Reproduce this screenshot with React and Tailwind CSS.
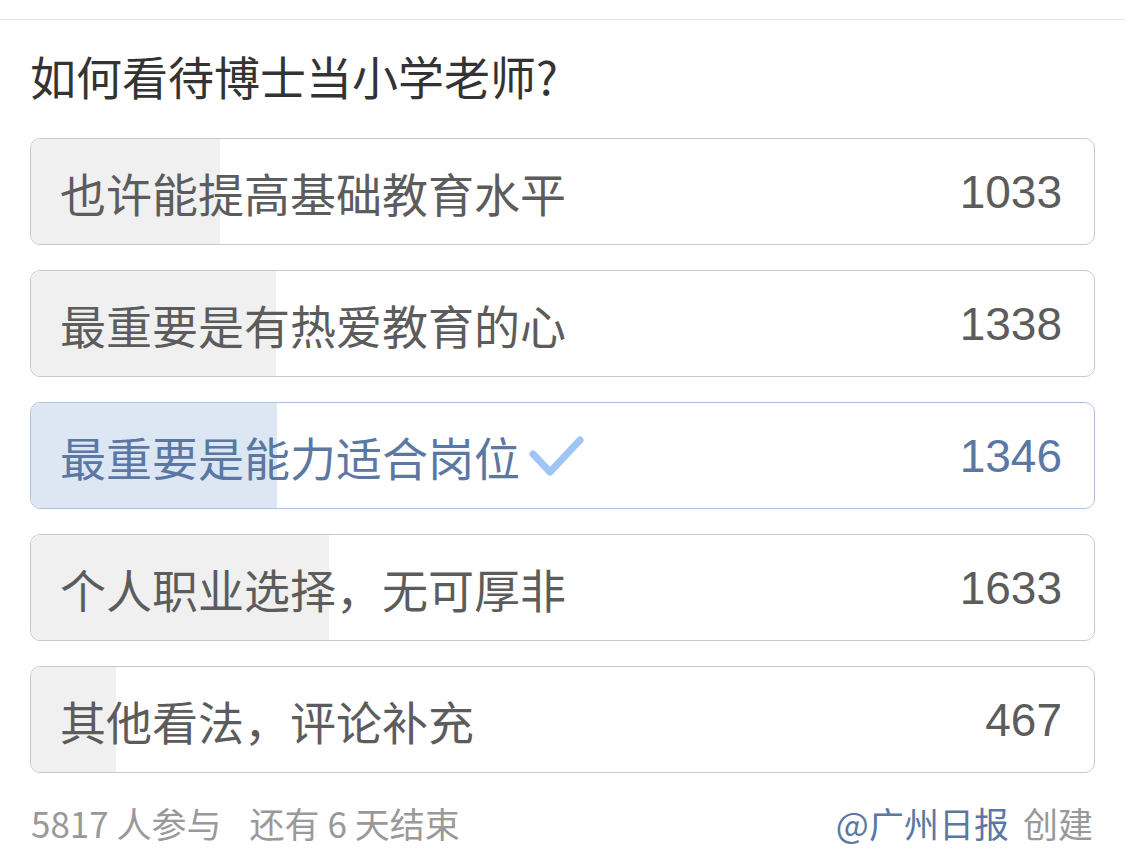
const options = [
  { label: "也许能提高基础教育水平", count: 1033 },
  { label: "最重要是有热爱教育的心", count: 1338 },
  { label: "最重要是能力适合岗位", count: 1346, selected: true },
  { label: "个人职业选择，无可厚非", count: 1633 },
  { label: "其他看法，评论补充", count: 467 },
];

const total = 5817;

function Check() {
  return (
    <svg width="56" height="44" viewBox="0 0 56 44" className="ml-[8px] shrink-0">
      <path
        d="M5 20 L22 38 L52 6"
        fill="none"
        stroke="#9fc5f6"
        strokeWidth="7"
        strokeLinecap="round"
        strokeLinejoin="round"
      />
    </svg>
  );
}

function Option({ label, count, selected }) {
  const pct = (count / total) * 100;
  return (
    <div
      className={`relative h-[107px] rounded-[10px] border overflow-hidden bg-white ${
        selected ? "border-[#aac4e4]" : "border-[#c9c9c9]"
      }`}
    >
      <div
        className={`absolute left-0 top-0 bottom-0 ${selected ? "bg-[#dde7f3]" : "bg-[#f0f0f0]"}`}
        style={{ width: `${pct}%` }}
      />
      <div className="relative h-full flex items-center justify-between pl-[29px] pr-[32px]">
        <div
          className={`flex items-center text-[46px] leading-none ${
            selected ? "text-[#5a78a3]" : "text-[#5c5c5c]"
          }`}
        >
          <span>{label}</span>
          {selected && <Check />}
        </div>
        <span
          className={`text-[46px] leading-none font-['Liberation_Sans','Noto_Sans_CJK_SC',sans-serif] ${
            selected ? "text-[#5a78a3]" : "text-[#5c5c5c]"
          }`}
        >
          {count}
        </span>
      </div>
    </div>
  );
}

export default function App() {
  return (
    <div className="min-h-screen bg-white font-['Noto_Sans_CJK_SC',sans-serif]">
      <div className="h-[20px] border-b border-[#e6e6e6]" />
      <div className="px-[30px]">
        <h1 className="pt-[33px] mb-[40px] text-[46px] leading-[45px] text-[#333333]">
          如何看待博士当小学老师?
        </h1>

        <div className="flex flex-col gap-[25px]">
          {options.map((o) => (
            <Option key={o.label} {...o} />
          ))}
        </div>

        <div className="flex items-center justify-between pt-[32px] text-[35px] leading-[36px] text-[#999999]">
          <div className="pl-[1px]">
            5817 人参与<span className="ml-[28px]">还有 6 天结束</span>
          </div>
          <div className="pr-[2px]">
            <span className="text-[#5a78a3]">@广州日报</span>
            <span className="ml-[14px]">创建</span>
          </div>
        </div>
      </div>
    </div>
  );
}
